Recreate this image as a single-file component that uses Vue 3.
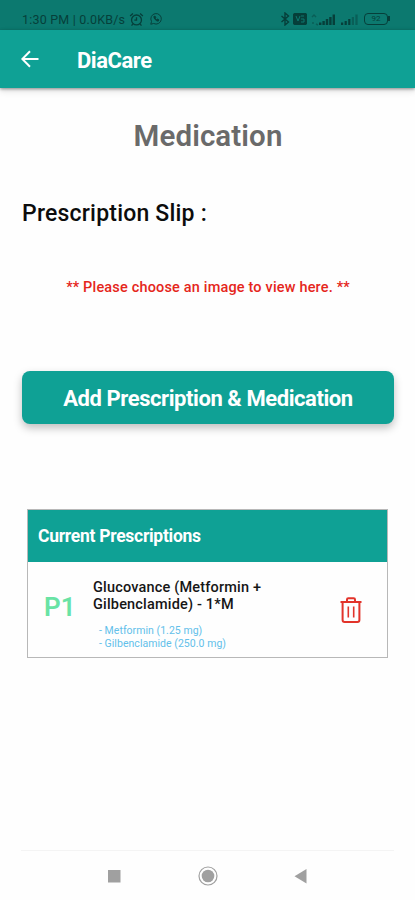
<template>
  <div class="screen">
    <div class="status">
      <span class="clock">1:30 PM | 0.0KB/s</span>
      <svg class="alarm" viewBox="0 0 16 16">
        <circle cx="8" cy="8.5" r="5.3" />
        <path d="M8 5.5v3.2H5.7M1.2 4.2l3-2.7M14.8 4.2l-3-2.7M4 13l-1.3 1.6M12 13l1.3 1.6" />
      </svg>
      <svg class="whatsapp" viewBox="0 0 16 16">
        <path d="M2 14l.9-3.2A6 6 0 1 1 5.3 13.100z" />
        <path d="M5.500 5.200c.3 2.700 2.300 4.800 5 5.300l.9-1.400-1.700-1-.9.800c-.8-.4-1.300-1-1.700-1.700l.6-.8-.8-1.700z" class="solid" />
      </svg>
      <div class="indicators">
        <svg class="bluetooth" viewBox="0 0 10 14">
          <path d="M1.500 4l7 6L5 13V1l3.500 3-7 6" />
        </svg>
        <svg class="volte" viewBox="0 0 14 12">
          <rect x="0.500" y="0.500" width="13" height="11" rx="2" class="solid" />
          <path d="M3 3l2 5 2-5M8 3h3M8 6h3v3H8" />
        </svg>
        <svg class="signal" viewBox="0 0 25 13">
          <path d="M1 4l2-2 2 2M1 10h2M5 11l2 1" class="faint" />
          <rect v-for="(h, i) in bars" :key="i" :x="8 + i * 3.400" :y="12 - h" width="2.400" :height="h" />
        </svg>
        <svg class="signal small" viewBox="0 0 19 13">
          <rect
            v-for="(h, i) in bars"
            :key="i"
            :x="1 + i * 3.600"
            :y="12 - h"
            width="2.200"
            :height="h"
            :class="{ faint: i > 2 }"
          />
        </svg>
        <span class="battery">92</span>
      </div>
    </div>

    <header class="appbar">
      <svg class="back" viewBox="0 0 18 18">
        <path d="M17.500 9H1.500M9 1.300L1.300 9 9 16.700" />
      </svg>
      <span class="name">DiaCare</span>
    </header>

    <main class="content">
      <h1>Medication</h1>
      <h2>Prescription Slip :</h2>
      <p class="hint">** Please choose an image to view here. **</p>
      <button class="add">Add Prescription &amp; Medication</button>

      <section class="card">
        <div class="card-head">Current Prescriptions</div>
        <div class="row" v-for="p in prescriptions" :key="p.id">
          <span class="tag">{{ p.id }}</span>
          <div class="info">
            <div class="drug">
              <div v-for="line in p.name" :key="line">{{ line }}</div>
            </div>
            <ul>
              <li v-for="d in p.doses" :key="d">- {{ d }}</li>
            </ul>
          </div>
          <svg class="trash" viewBox="0 0 22 26">
            <path d="M0.500 5h21M7 4.500V2.500Q7 1.200 8.300 1.200h5.400Q15 1.200 15 2.500v2M2.600 5v18q0 2 2 2h12.800q2 0 2-2V5" />
            <path d="M8.300 9.500v11M13.700 9.500v11" class="slats" />
          </svg>
        </div>
      </section>
    </main>

    <nav class="navbar">
      <svg viewBox="0 0 20 20"><rect x="3" y="4" width="12.500" height="12.500" /></svg>
      <svg viewBox="0 0 20 20">
        <circle cx="10" cy="10" r="9" class="ring" />
        <circle cx="10" cy="10" r="6.300" />
      </svg>
      <svg viewBox="0 0 20 20"><path d="M3.500 10.300L15.500 3v14.600z" /></svg>
    </nav>
  </div>
</template>

<script setup>
const bars = [2.5, 4, 6, 8, 10.5];

const prescriptions = [
  {
    id: "P1",
    name: ["Glucovance (Metformin +", "Gilbenclamide) - 1*M"],
    doses: ["Metformin (1.25 mg)", "Gilbenclamide (250.0 mg)"],
  },
];
</script>

<style>
body {
  background-color: #fefefe;
}
</style>

<style scoped>
.screen {
  display: flex;
  flex-direction: column;
  width: 415px;
  height: 900px;
  overflow: hidden;
  font-family: Roboto, "Liberation Sans", sans-serif;
  background-color: #fefefe;
}

svg {
  flex: none;
  fill: none;
}

.status {
  box-sizing: border-box;
  display: flex;
  align-items: center;
  height: 30px;
  padding: 8px 25px 0 22px;
  background-color: #0c796f;
  color: #063f3a;
}
.status svg {
  stroke: #063f3a;
  stroke-width: 1.4;
}
.status .solid {
  fill: #063f3a;
}
.clock {
  width: 107px;
  font-size: 12.5px;
  letter-spacing: 0.2px;
  white-space: nowrap;
}
.alarm {
  width: 15px;
  height: 15px;
}
.whatsapp {
  width: 14px;
  height: 14px;
  margin-left: 5px;
}
.status .whatsapp {
  stroke-width: 1.1;
}
.indicators {
  display: flex;
  align-items: center;
  margin-left: auto;
}
.bluetooth {
  width: 10px;
  height: 14px;
  margin-right: 3px;
}
.volte {
  width: 14px;
  height: 12px;
}
.status .volte path {
  stroke: #0c796f;
  stroke-width: 1;
}
.signal {
  width: 25px;
  height: 13px;
  margin-left: 4px;
}
.signal.small {
  width: 19px;
}
.signal rect {
  fill: #063f3a;
  stroke: none;
}
.signal .faint {
  opacity: 0.45;
}
.battery {
  position: relative;
  box-sizing: border-box;
  width: 24px;
  height: 12px;
  margin: 0 2px 0 5px;
  border: 1.5px solid #063f3a;
  border-radius: 4px;
  font-size: 8px;
  line-height: 10px;
  text-align: center;
}
.battery::after {
  content: "";
  position: absolute;
  top: 2px;
  right: -3px;
  width: 2px;
  height: 5px;
  background-color: #063f3a;
}

.appbar {
  display: flex;
  align-items: center;
  height: 58px;
  padding-left: 21px;
  background-color: #0fa195;
  box-shadow: 0 1px 3px #00000066, 0 3px 7px #0000001f;
}
.back {
  width: 18px;
  height: 18px;
  stroke: #fff;
  stroke-width: 2;
}
.name {
  margin: 3px 0 0 38px;
  font-size: 22px;
  font-weight: 700;
  letter-spacing: -0.45px;
  color: #fff;
}

.content {
  flex: 1;
  display: flex;
  flex-direction: column;
  padding: 30px 21px 0 22px;
}
h1 {
  margin: 0;
  font-size: 29.5px;
  line-height: 36px;
  font-weight: 600;
  letter-spacing: 0.1px;
  text-align: center;
  color: #6a6a6a;
}
h2 {
  margin: 46px 0 0;
  font-size: 23px;
  line-height: 28px;
  font-weight: 500;
  letter-spacing: 0.2px;
  color: #0c0c0c;
}
.hint {
  margin: 50px 0 0;
  font-size: 14.5px;
  line-height: 20px;
  font-weight: 500;
  letter-spacing: 0.17px;
  text-align: center;
  color: #e5261b;
}
.add {
  height: 53px;
  margin: 73px 0 0;
  padding: 2px 0 0;
  border: none;
  border-radius: 8px;
  font-family: inherit;
  font-size: 22px;
  font-weight: 700;
  letter-spacing: -0.43px;
  color: #fff;
  background-color: #0fa195;
  box-shadow: 0 4px 8px #00000040;
}

.card {
  margin: 85px 6px 0 5px;
  border: 1px solid #b8b8b8;
}
.card-head {
  height: 52px;
  padding-left: 10px;
  font-size: 17.5px;
  font-weight: 700;
  letter-spacing: -0.28px;
  line-height: 52px;
  color: #fff;
  background-color: #0fa195;
}
.row {
  display: flex;
  align-items: center;
  height: 95px;
}
.tag {
  width: 49px;
  margin-left: 16px;
  padding-bottom: 5px;
  font-size: 26px;
  font-weight: 600;
  color: #69e3a5;
}
.info {
  flex: 1;
  padding-top: 10px;
}
.drug {
  font-size: 14.5px;
  font-weight: 500;
  line-height: 17px;
  letter-spacing: 0.18px;
  color: #161616;
}
ul {
  margin: 11px 0 0 6px;
  padding: 0;
  list-style: none;
  font-size: 10.5px;
  line-height: 13px;
  letter-spacing: 0.04px;
  color: #62c0ea;
}
.trash {
  width: 22px;
  height: 26px;
  margin-right: 25px;
  stroke: #e2332a;
  stroke-width: 2;
}
.trash .slats {
  stroke-width: 1.6;
}

.navbar {
  display: flex;
  justify-content: center;
  gap: 73px;
  height: 34px;
  margin: 0 21px;
  padding-top: 15px;
  border-top: 1px solid #f4f4f4;
}
.navbar svg {
  width: 20px;
  height: 20px;
  fill: #a0a0a0;
}
.navbar .ring {
  fill: none;
  stroke: #a0a0a0;
  stroke-width: 1.2;
}
</style>
